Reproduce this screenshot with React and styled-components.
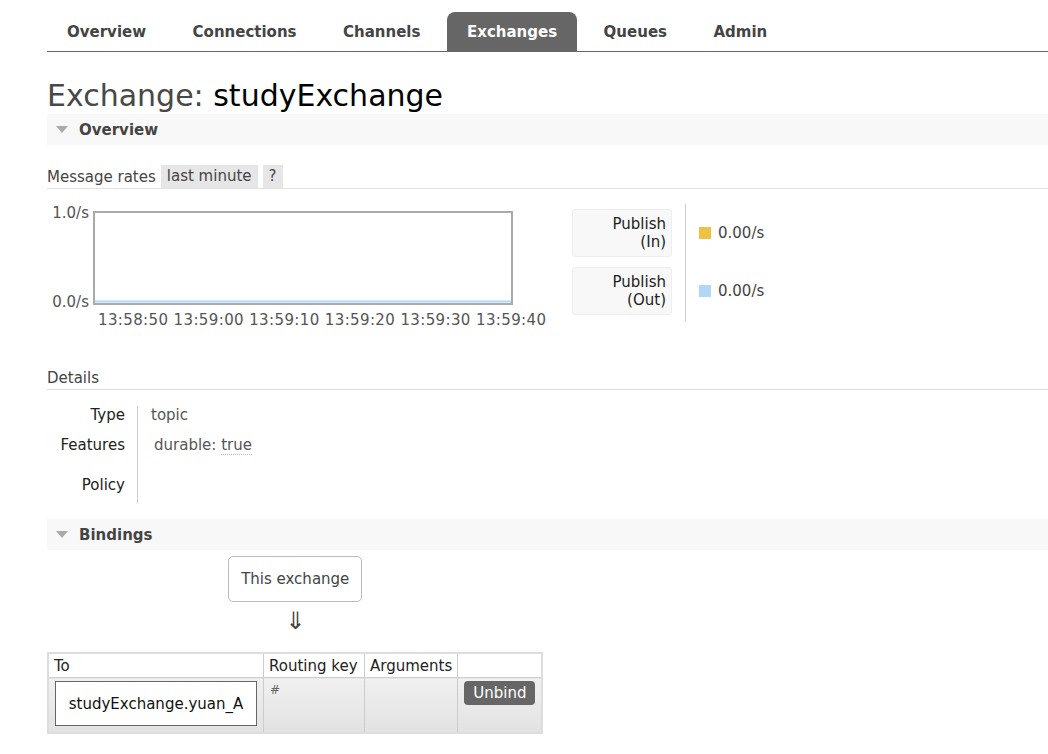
import React from "react";
import styled, { createGlobalStyle } from "styled-components";

const Global = createGlobalStyle`
  html, body {
    margin: 0;
    padding: 0;
    background: #fff;
    font-family: "DejaVu Sans", Verdana, sans-serif;
    color: #444;
    font-size: 15px;
  }
`;

const Page = styled.div`
  padding-left: 47px;
  overflow: hidden;
`;

const Menu = styled.ul`
  list-style: none;
  margin: 12px 0 0;
  padding: 0;
  display: flex;
  border-bottom: 1px solid #666;
  height: 39px;
`;

const Tab = styled.li`
  margin-right: 6.5px;
  padding: 0 20px;
  display: flex;
  align-items: center;
  font-weight: bold;
  font-size: 15px;
  border-radius: 8px 8px 0 0;
  color: ${(p) => (p.$active ? "#fff" : "#444")};
  background: ${(p) => (p.$active ? "#666" : "transparent")};
`;

const Title = styled.h1`
  margin: 26px 0 0;
  font-weight: normal;
  font-size: 30px;
  line-height: 36px;
  color: #484848;

  b {
    font-weight: normal;
    color: #000;
  }
`;

const SectionHead = styled.div`
  display: flex;
  align-items: center;
  height: 31px;
  background: #f8f8f8;
  font-weight: bold;
  font-size: 15px;
  color: #444;
  margin-top: ${(p) => p.$top || 0}px;

  &::before {
    content: "";
    margin: 0 11px 0 9px;
    border-left: 6px solid transparent;
    border-right: 6px solid transparent;
    border-top: 7px solid #aaa;
  }
`;

const SubHead = styled.div`
  display: flex;
  align-items: center;
  gap: 5px;
  border-bottom: 1px solid #e0e0e0;
  height: 23px;
  margin-top: ${(p) => p.$top || 0}px;
  color: #444;
`;

const Pill = styled.span`
  background: #e6e6e6;
  padding: 3px 6px;
  line-height: 17px;
  color: #444;
`;

const RatesRow = styled.div`
  display: flex;
  align-items: flex-start;
  margin-top: 10px;
`;

const LegendLabels = styled.div`
  display: grid;
  grid-template-columns: 100px;
  grid-auto-rows: 48px;
  row-gap: 10px;
  margin: 10px 13px 0 0;
`;

const KeyBox = styled.div`
  background: #f8f8f8;
  border: 1px solid #eee;
  border-radius: 3px;
  text-align: right;
  padding: 5px 5px 0 0;
  line-height: 18px;
  color: #222;
`;

const Legend = styled.div`
  display: flex;
  flex-direction: column;
  gap: 10px;
  margin-top: 5px;
  padding-top: 5px;
  border-left: 1px solid #ccc;
  height: 112px;
`;

const KeyValue = styled.div`
  height: 48px;
  display: flex;
  align-items: center;
  padding-left: 13px;
  gap: 7px;
  color: #444;

  &::before {
    content: "";
    width: 12px;
    height: 12px;
    background: ${(p) => p.$color};
  }
`;

const DetailGrid = styled.div`
  display: grid;
  grid-template-columns: 90px 1px auto;
  grid-template-rows: 30px 30px 37px;
  margin-top: 16px;
`;

const Label = styled.div`
  grid-column: 1;
  text-align: right;
  padding-right: 12px;
  align-self: ${(p) => (p.$bottom ? "center" : "start")};
  color: #222;
`;

const Divider = styled.div`
  grid-column: 2;
  grid-row: 1 / 4;
  background: #ccc;
`;

const Value = styled.div`
  grid-column: 3;
  padding-left: ${(p) => p.$pad || 13}px;
  color: #555;
`;

const Dotted = styled.span`
  border-bottom: 1px dotted #bbb;
`;

const Bindings = styled.div`
  display: inline-flex;
  flex-direction: column;
  align-items: center;
  margin-top: 6px;
`;

const ExchangeBox = styled.div`
  border: 1px solid #bbb;
  border-radius: 5px;
  padding: 0 12px;
  height: 44px;
  line-height: 44px;
  color: #444;
`;

const Arrow = styled.div`
  font-size: 24px;
  line-height: 28px;
  margin: 5px 0 17px;
  color: #444;
`;

const Table = styled.table`
  border-collapse: collapse;
  border: 2px solid #ddd;

  th {
    font-weight: normal;
    text-align: left;
    color: #222;
    background: #fff;
    border: 1px solid #ccc;
    padding: 2px 5px;
    height: 19px;
  }

  td {
    border: 1px solid #ccc;
    vertical-align: top;
    padding: 3px 6px 6px;
    background: linear-gradient(#f0f0f0, #e2e2e2);
  }
`;

const QueueBox = styled.div`
  background: #fff;
  border: 1px solid #666;
  width: 200px;
  height: 43px;
  display: flex;
  align-items: center;
  justify-content: center;
  color: #111;
`;

const Hash = styled.span`
  font-size: 12px;
  color: #666;
  display: block;
  padding-top: 2px;
  width: 88px;
`;

const Empty = styled.div`
  width: 80px;
`;

const Button = styled.button`
  background: #666;
  color: #fff;
  border: none;
  border-radius: 4px;
  font-family: inherit;
  font-size: 15px;
  padding: 0 9px;
  height: 24px;
`;

const ticks = ["13:58:50", "13:59:00", "13:59:10", "13:59:20", "13:59:30", "13:59:40"];

function Chart() {
  return (
    <svg width="525" height="135" viewBox="0 0 525 135">
      <g fontFamily="DejaVu Sans, Verdana, sans-serif" fontSize="15" fill="#555">
        <text x="42" y="19" textAnchor="end">1.0/s</text>
        <text x="42" y="108" textAnchor="end">0.0/s</text>
        {ticks.map((t, i) => (
          <text key={t} x={51 + i * 75.6} y="126" textLength="70">{t}</text>
        ))}
      </g>
      <rect x="47" y="13" width="418" height="92" fill="#fff" stroke="#aaa" strokeWidth="2" />
      <line x1="48" y1="102.5" x2="464" y2="102.5" stroke="#afd8f8" strokeWidth="2" />
    </svg>
  );
}

export default function App() {
  return (
    <Page>
      <Global />
      <Menu>
        <Tab>Overview</Tab>
        <Tab>Connections</Tab>
        <Tab>Channels</Tab>
        <Tab $active>Exchanges</Tab>
        <Tab>Queues</Tab>
        <Tab>Admin</Tab>
      </Menu>

      <Title>
        Exchange: <b>studyExchange</b>
      </Title>

      <SectionHead>Overview</SectionHead>
      <SubHead $top={20}>
        Message rates <Pill>last minute</Pill> <Pill>?</Pill>
      </SubHead>

      <RatesRow>
        <Chart />
        <LegendLabels>
          <KeyBox>
            Publish
            <br />
            (In)
          </KeyBox>
          <KeyBox>
            Publish
            <br />
            (Out)
          </KeyBox>
        </LegendLabels>
        <Legend>
          <KeyValue $color="#edc240">0.00/s</KeyValue>
          <KeyValue $color="#afd8f8">0.00/s</KeyValue>
        </Legend>
      </RatesRow>

      <SubHead $top={32}>Details</SubHead>
      <DetailGrid>
        <Label>Type</Label>
        <Divider />
        <Value>topic</Value>
        <Label>Features</Label>
        <Value $pad={16}>
          durable: <Dotted>true</Dotted>
        </Value>
        <Label $bottom>Policy</Label>
        <Value />
      </DetailGrid>

      <SectionHead $top={16}>Bindings</SectionHead>
      <div>
        <Bindings>
          <ExchangeBox>This exchange</ExchangeBox>
          <Arrow>⇓</Arrow>
          <Table>
            <thead>
              <tr>
                <th>To</th>
                <th>Routing key</th>
                <th>Arguments</th>
                <th></th>
              </tr>
            </thead>
            <tbody>
              <tr>
                <td>
                  <QueueBox>studyExchange.yuan_A</QueueBox>
                </td>
                <td>
                  <Hash>#</Hash>
                </td>
                <td>
                  <Empty />
                </td>
                <td>
                  <Button>Unbind</Button>
                </td>
              </tr>
            </tbody>
          </Table>
        </Bindings>
      </div>
    </Page>
  );
}
